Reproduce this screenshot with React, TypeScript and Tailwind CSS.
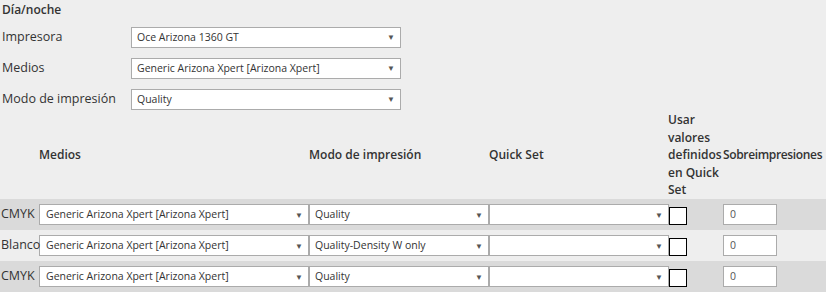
import React from "react";

function FakeSelect({ value, w, className = "" }: { value: string; w: string; className?: string }) {
  return (
    <div
      className={`${w} ${className} h-[21px] bg-white border border-[#ababab] flex items-center justify-between pl-[5px] pr-[5px] text-[10.5px] text-[#333] overflow-hidden whitespace-nowrap`}
    >
      <span className="leading-none">{value}</span>
      <span className="text-[8px] text-[#555] leading-none">▼</span>
    </div>
  );
}

const rows = [
  { label: "CMYK", modo: "Quality", dark: true },
  { label: "Blanco", modo: "Quality-Density W only", dark: false },
  { label: "CMYK", modo: "Quality", dark: true },
];

export default function App() {
  return (
    <div className="w-[826px] h-[292px] bg-[#eeeeee] text-[#333] font-['Segoe_UI','Open_Sans',sans-serif] text-[12px] overflow-hidden">
      <div className="pl-[2px] h-[26px] pt-[1px] font-semibold leading-[17px]">Día/noche</div>
      <div className="flex flex-col gap-[9px]">
        {[
          ["Impresora", "Oce Arizona 1360 GT"],
          ["Medios", "Generic Arizona Xpert [Arizona Xpert]"],
          ["Modo de impresión", "Quality"],
        ].map(([l, v]) => (
          <div key={l} className="flex items-center h-[22px]">
            <div className="w-[131px] pl-[2px] text-[12.5px]">{l}</div>
            <FakeSelect value={v} w="w-[270px]" />
          </div>
        ))}
      </div>
      <table className="mt-[1px] border-collapse table-fixed w-[826px]">
        <colgroup>
          <col className="w-[39px]" />
          <col className="w-[270px]" />
          <col className="w-[180px]" />
          <col className="w-[179px]" />
          <col className="w-[55px]" />
          <col className="w-[103px]" />
        </colgroup>
        <thead>
          <tr className="h-[88px] font-semibold leading-[17.5px] text-left align-middle">
            <th className="p-0"></th>
            <th className="p-0 font-semibold">Medios</th>
            <th className="p-0 font-semibold">Modo de impresión</th>
            <th className="p-0 font-semibold">Quick Set</th>
            <th className="p-0 font-semibold whitespace-nowrap">
              Usar
              <br />
              valores
              <br />
              definidos
              <br />
              en Quick
              <br />
              Set
            </th>
            <th className="p-0 font-semibold whitespace-nowrap tracking-[-0.35px]">Sobreimpresiones</th>
          </tr>
        </thead>
        <tbody>
          {rows.map((r, i) => (
            <tr key={i} className={`${r.dark ? "bg-[#dadada]" : "bg-[#eeeeee]"} h-[31px]`}>
              <td className="p-0 pl-[1px] whitespace-nowrap text-[12.5px]">{r.label}</td>
              <td className="p-0">
                <FakeSelect value="Generic Arizona Xpert [Arizona Xpert]" w="w-[270px]" className="pl-[6px]" />
              </td>
              <td className="p-0">
                <FakeSelect value={r.modo} w="w-[180px]" />
              </td>
              <td className="p-0">
                <FakeSelect value="" w="w-[180px]" />
              </td>
              <td className="p-0">
                <div className="w-[18px] h-[18px] ml-[1px] mt-[3px] bg-white border-[1.5px] border-black" />
              </td>
              <td className="p-0">
                <div className="w-[54px] h-[21px] bg-white border border-[#ababab] flex items-center pl-[6px] text-[10.5px] text-[#555]">
                  0
                </div>
              </td>
            </tr>
          ))}
        </tbody>
      </table>
    </div>
  );
}
